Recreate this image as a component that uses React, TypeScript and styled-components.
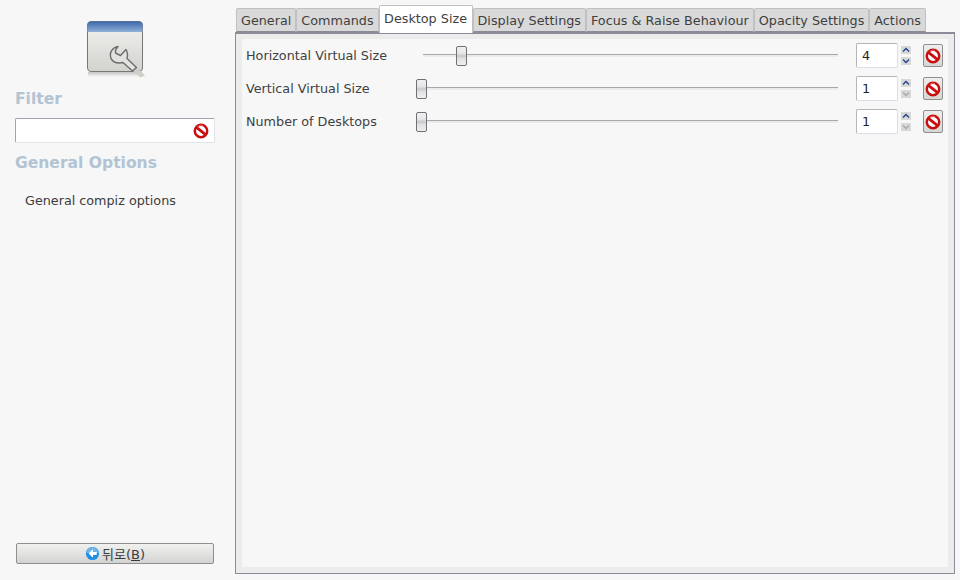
import React from "react";
import styled, { createGlobalStyle } from "styled-components";

const Global = createGlobalStyle`
  html, body { margin: 0; padding: 0; width: 960px; height: 580px; overflow: hidden; background: #f7f7f7; }
  * { box-sizing: border-box; }
`;
const Page = styled.div`
  width: 960px; height: 580px; display: flex; background: #f7f7f7;
  font-family: "DejaVu Sans", "Noto Sans CJK KR", sans-serif; font-size: 12.75px; color: #3a3a3a;
`;
const Side = styled.aside`
  width: 235px; height: 580px; padding: 20px 20px 16px 15px; display: flex; flex-direction: column; flex: none;
`;
const Logo = styled.svg`
  display: block; align-self: center; width: 64px; height: 64px; flex: none; overflow: visible;
`;
const Heading = styled.h2`
  margin: 0; font-size: 15.55px; line-height: 20px; font-weight: 700; color: #b2c4d3;
  font-family: "DejaVu Sans", sans-serif;
`;
const FilterHeading = styled(Heading)` margin-top: 5px; `;
const OptionsHeading = styled(Heading)` margin-top: 10px; `;
const FilterBox = styled.div`
  margin-top: 9px; width: 200px; height: 25px; background: #fff; display: flex; align-items: center; justify-content: flex-end;
  border: 1px solid #dfe3ea; border-top-color: #a3a3ad; border-left-color: #a3a3ad; border-radius: 2px; padding-right: 5px;
`;
const SectionItem = styled.div`
  margin-top: 18px; padding-left: 10px; line-height: 20px; font-size: 12.75px; color: #3c3c3c;
`;
const BackButton = styled.button`
  margin-top: auto; margin-left: 1px; width: 198px; height: 21px; padding: 0; border: 1px solid #8f8f8f; border-radius: 2px;
  background: linear-gradient(#f1f1ef, #d3d3d1); display: flex; align-items: center; justify-content: center; gap: 2px;
  font-family: "DejaVu Sans", "Noto Sans CJK KR", sans-serif; font-size: 13px; color: #3a3a3a;
`;
const Main = styled.main`
  width: 725px; height: 580px; padding-top: 5px; flex: none; display: flex; flex-direction: column;
`;
const TabBar = styled.div`
  display: flex; height: 28px; align-items: flex-start; padding-left: 1px; position: relative; z-index: 1; margin-bottom: -1px;
`;
const Tab = styled.div<{ $active?: boolean }>`
  height: ${p => (p.$active ? 28 : 24)}px; margin-top: ${p => (p.$active ? 0 : 3)}px; padding: 0 ${p => (p.$active ? 4.5 : 4)}px;
  line-height: ${p => (p.$active ? 26 : 24)}px; font-size: 12.78px; white-space: nowrap;
  background: ${p => (p.$active ? "#ffffff" : "#d9d9d9")};
  border: 1px solid #c0c0c3; border-bottom: ${p => (p.$active ? "none" : "1px solid #8c8a96")};
  border-radius: 2px 2px 0 0; color: #3f3f3f;
`;
const Panel = styled.div`
  width: 720px; height: 542px; border: 1px solid #8d8a9a; border-top-width: 2px; background: #ececec; padding: 5px 6px 6px 6px;
`;
const Inner = styled.div`
  height: 100%; background: #f7f7f7; display: flex; flex-direction: column;
`;
const Row = styled.div`
  height: 33px; display: grid; grid-template-columns: 170px 440px 45px 22px 20px; align-items: center; padding-left: 4px;
`;
const Label = styled.div` font-size: 12.75px; line-height: 20px; color: #3f3f3f; white-space: nowrap; `;
const Slider = styled.div`
  position: relative; height: 20px; display: flex; align-items: center; padding-left: 7px; width: 422px;
`;
const Track = styled.div`
  width: 100%; height: 4px; border-top: 1px solid #a8a8a8; background: #ebebeb; border-bottom: 1px solid #f8f8f8;
`;
const Thumb = styled.div<{ $left: number }>`
  position: absolute; top: 0; left: ${p => p.$left}px; width: 11px; height: 20px; border: 1px solid #6f7078; border-radius: 2px;
  background: linear-gradient(#f0f0f0 0, #e6e6e6 35%, #c8c8c8 50%, #e2e2e2 65%, #eeeeee 100%);
`;
const Spin = styled.div`
  width: 42px; height: 25px; background: #fff; border: 1px solid #d8dde6; border-top-color: #b5b5bb; border-left-color: #b5b5bb; border-radius: 2px;
  font-size: 12.75px; line-height: 23px; padding-left: 5px; color: #222;
`;
const Steppers = styled.div` display: flex; flex-direction: column; gap: 3px; width: 10px; `;
const Step = styled.div<{ $disabled?: boolean }>`
  width: 10px; height: 8px; background: #d8d8d8; display: flex; align-items: center; justify-content: center;
  color: ${p => (p.$disabled ? "#a8a8a8" : "#1f3f8f")};
`;
const ResetButton = styled.button`
  width: 20px; height: 23px; padding: 0; border: 1px solid #8f8f8f; border-radius: 2px;
  background: linear-gradient(#eeeeec, #d6d6d4); display: flex; align-items: center; justify-content: center;
`;

const NoEntry = () => (
  <svg width="16" height="16" viewBox="0 0 16 16">
    <circle cx="8" cy="8" r="6.2" fill="#fff" stroke="#c80f0f" strokeWidth="2.5" />
    <path d="M3.7 4.7 L12.3 11.3" stroke="#c80f0f" strokeWidth="2.8" />
    <path d="M4.5 3.6 A5.5 5.5 0 0 1 10 2.4" fill="none" stroke="#ee6a6a" strokeWidth="0.9" />
  </svg>
);
const Chevron = ({ up }: { up?: boolean }) => (
  <svg width="8" height="6" viewBox="0 0 8 6">
    <path d={up ? "M1 4.5 L4 1.5 L7 4.5" : "M1 1.5 L4 4.5 L7 1.5"} fill="none" stroke="currentColor" strokeWidth="1.3" />
  </svg>
);

const rows = [
  { label: "Horizontal Virtual Size", value: 4, left: 40, first: true },
  { label: "Vertical Virtual Size", value: 1, left: 0 },
  { label: "Number of Desktops", value: 1, left: 0 },
];
const tabs = ["General", "Commands", "Desktop Size", "Display Settings", "Focus & Raise Behaviour", "Opacity Settings", "Actions"];

export default function App() {
  return (
    <Page>
      <Global />
      <Side>
        <Logo viewBox="0 0 64 64">
          <defs>
            <linearGradient id="body" x1="0" y1="0" x2="0" y2="1">
              <stop offset="0" stopColor="#f2f2f0" />
              <stop offset="1" stopColor="#d2d3cd" />
            </linearGradient>
            <linearGradient id="bar" x1="0" y1="0" x2="0" y2="1">
              <stop offset="0" stopColor="#3a68aa" />
              <stop offset="1" stopColor="#8fb0d8" />
            </linearGradient>
            <linearGradient id="shade" x1="0" y1="0" x2="0" y2="1">
              <stop offset="0" stopColor="#000" stopOpacity=".2" />
              <stop offset="1" stopColor="#000" stopOpacity="0" />
            </linearGradient>
          </defs>
          <rect x="5" y="52" width="54" height="5" fill="url(#shade)" />
          <rect x="4.5" y="1.5" width="55" height="50" rx="3.5" fill="url(#body)" stroke="#777" />
          <path d="M4.5 12 V5 a3.5 3.5 0 0 1 3.5 -3.5 H56 a3.5 3.5 0 0 1 3.5 3.5 V12 Z" fill="url(#bar)" />
          <path d="M49 50 L57.5 57.5 L62 55.5 L53 46.5 Z" fill="#cfcfca" />
          <path d="M35 26.5 C31 27 27.3 30.5 27.3 35 C27.3 40 31 43 36 43 L40 42.5 L49.5 51 L53.5 47.5 L44 38.5 C44.8 35.5 44.5 32 43 29.5 L37.5 35.5 L32.5 33 L32.5 30 Z" fill="#e2e2de" stroke="#6d6d6d" strokeWidth="1.4" strokeLinejoin="round" />
        </Logo>
        <FilterHeading>Filter</FilterHeading>
        <FilterBox><NoEntry /></FilterBox>
        <OptionsHeading>General Options</OptionsHeading>
        <SectionItem>General compiz options</SectionItem>
        <BackButton>
          <svg width="15" height="15" viewBox="0 0 16 16">
            <circle cx="8" cy="8" r="7" fill="#1f8fe6" />
            <path d="M1.5 7.5 a6.5 6.5 0 0 1 13 0 Z" fill="#6fb3ea" />
            <path d="M8.5 3.5 L3.8 8 L8.5 12.5 V9.7 H12.5 V6.3 H8.5 Z" fill="#fff" />
          </svg>
          <span>뒤로(<u>B</u>)</span>
        </BackButton>
      </Side>
      <Main>
        <TabBar>
          {tabs.map(t => <Tab key={t} $active={t === "Desktop Size"}>{t}</Tab>)}
        </TabBar>
        <Panel>
          <Inner>
            {rows.map(r => (
              <Row key={r.label}>
                <Label>{r.label}</Label>
                <Slider>
                  <Track />
                  <Thumb $left={r.left} />
                </Slider>
                <Spin>{r.value}</Spin>
                <Steppers>
                  <Step><Chevron up /></Step>
                  <Step $disabled={!r.first}><Chevron /></Step>
                </Steppers>
                <ResetButton><NoEntry /></ResetButton>
              </Row>
            ))}
          </Inner>
        </Panel>
      </Main>
    </Page>
  );
}
